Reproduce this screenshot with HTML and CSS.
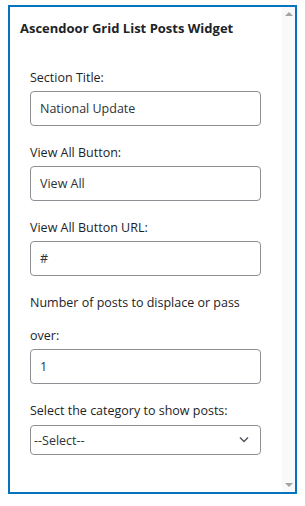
FILE: index.html
```html
<!DOCTYPE html>
<html>
	<head>
		<meta charset="utf-8">
		<title>Ascendoor Grid List Posts Widget</title>
		<link rel="stylesheet" href="styles.css">
	</head>
	<body>
		<div class="widget">
			<div class="widget-body">
				<h3 class="widget-title">Ascendoor Grid List Posts Widget</h3>
				<form class="widget-form">
					<p class="field">
						<label for="title">Section Title:</label>
						<input id="title" type="text" value="National Update">
					</p>
					<p class="field">
						<label for="button">View All Button:</label>
						<input id="button" type="text" value="View All">
					</p>
					<p class="field">
						<label for="url">View All Button URL:</label>
						<input id="url" type="text" value="#">
					</p>
					<p class="field">
						<label for="offset">Number of posts to displace or pass over:</label>
						<input id="offset" type="number" value="1">
					</p>
					<p class="field">
						<label for="category">Select the category to show posts:</label>
						<span class="select-wrap">
							<select id="category">
								<option>--Select--</option>
							</select>
							<svg class="chevron" width="12" height="8" viewBox="0 0 12 8">
								<path d="M2 1.5 L6 5.5 L10 1.5" fill="none" stroke="#50575e" stroke-width="1.5"/>
							</svg>
						</span>
					</p>
				</form>
			</div>
			<!-- fake scrollbar, just the two arrows -->
			<div class="scrollbar">
				<span class="arrow-up"></span>
				<span class="arrow-down"></span>
			</div>
		</div>
	</body>
</html>
```

FILE: styles.css
```css
*{
	margin: 0;
	padding: 0;
	box-sizing: border-box;
}

body{
	margin: 5px 8px;
	background: #fff;
	font-family: "Open Sans", "Noto Sans", sans-serif;
	font-size: 12.5px;
	color: #1d2327;
}

/* outer box */
.widget{
	width: 289px;
	height: 489px;
	border: 2px solid #0574bf;
	display: flex;
}

.widget-body{
	flex: 1;
	padding: 12px 0 0 10px;
}

.widget-title{
	font-size: 13px;
	font-weight: 700;
	line-height: 18px;
}

/* form fields */
.widget-form{
	margin-top: 24px;
	padding-left: 10px;
	display: flex;
	flex-direction: column;
	gap: 10px;
}

.field{
	display: flex;
	flex-direction: column;
	width: 231px;
}

.field label{
	line-height: 33px;
	margin-bottom: -3px;
}

.field input{
	height: 35px;
	padding: 0 9px;
	border: 1px solid #8c8f94;
	border-radius: 4px;
	font: inherit;
	color: #2c3338;
	background: #fff;
	appearance: none;
	-moz-appearance: textfield;
}

.field input::-webkit-inner-spin-button,
.field input::-webkit-outer-spin-button{
	-webkit-appearance: none;
	margin: 0;
}

.select-wrap{
	position: relative;
	display: block;
	margin-top: 1px;
}

.select-wrap select{
	width: 100%;
	height: 30px;
	padding: 0 24px 0 3px;
	border: 1px solid #8c8f94;
	border-radius: 4px;
	font: inherit;
	color: #2c3338;
	background: #fff;
	appearance: none;
}

.chevron{
	position: absolute;
	right: 11px;
	top: 11px;
	pointer-events: none;
}

/* scrollbar column */
.scrollbar{
	width: 13px;
	background: #f9f9f9;
	display: flex;
	flex-direction: column;
	justify-content: space-between;
	align-items: center;
	padding: 5px 0;
}

.arrow-up,
.arrow-down{
	width: 0;
	height: 0;
	border-left: 4px solid transparent;
	border-right: 4px solid transparent;
}

.arrow-up{
	border-bottom: 4px solid #a3a3a3;
}

.arrow-down{
	border-top: 4px solid #a3a3a3;
}
```
